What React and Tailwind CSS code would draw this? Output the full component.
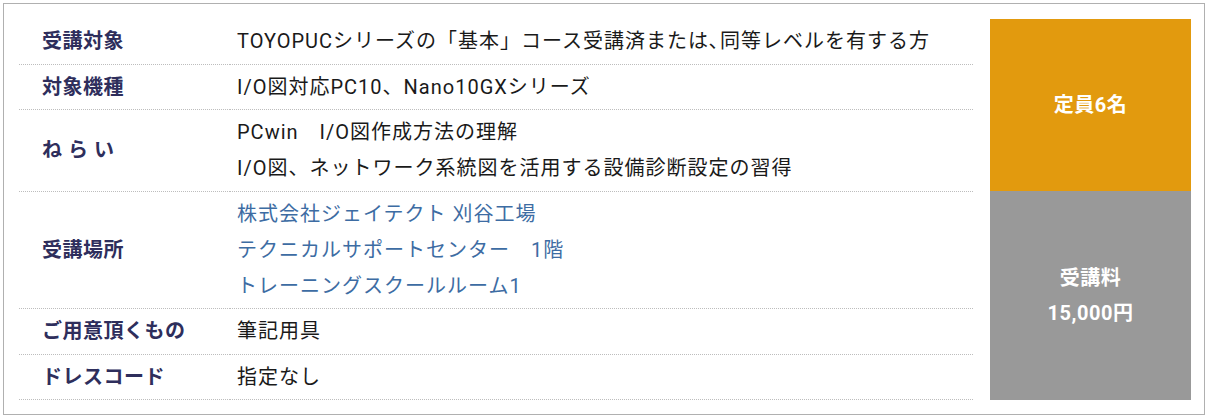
import React from "react";

const rows = [
  { label: "受講対象", lines: ["TOYOPUCシリーズの「基本」コース受講済または､同等レベルを有する方"] },
  { label: "対象機種", lines: ["I/O図対応PC10、Nano10GXシリーズ"] },
  { label: "ね ら い", lines: ["PCwin　I/O図作成方法の理解", "I/O図、ネットワーク系統図を活用する設備診断設定の習得"] },
  { label: "受講場所", lines: ["株式会社ジェイテクト 刈谷工場", "テクニカルサポートセンター　1階", "トレーニングスクールルーム1"], blue: true },
  { label: "ご用意頂くもの", lines: ["筆記用具"] },
  { label: "ドレスコード", lines: ["指定なし"] },
];

export default function App() {
  return (
    <div
      className="w-[1206px] h-[420px] bg-white pt-[3px] pl-[3px]"
      style={{ fontFamily: 'Roboto, "Noto Sans CJK JP", sans-serif' }}
    >
      <div className="w-[1202px] h-[412px] border border-[#b0b0b0] pt-[15px] pl-[15px] flex items-start gap-[17px]">
        <div className="w-[954px] flex flex-col text-[20px]">
          {rows.map((r, i) => (
            <div key={i} className="flex">
              <div className="w-[211px] pl-[23px] flex items-center border-b border-dotted border-[#bdbdbd] font-bold tracking-[0.5px] text-[#2e2e5c]">
                {r.label}
              </div>
              <div
                className={`flex-1 pl-[7px] py-[4.25px] leading-[36px] tracking-[1px] border-b border-dotted border-[#bdbdbd] ${
                  r.blue ? "text-[#3d6ca3]" : "text-[#1a1a1a]"
                }`}
              >
                {r.lines.map((l, j) => (
                  <div key={j} className="whitespace-nowrap">{l}</div>
                ))}
              </div>
            </div>
          ))}
        </div>
        <div className="w-[201px] h-[381px] flex flex-col text-white font-bold text-[20px] tracking-[0.5px]">
          <div className="h-[172px] bg-[#e29a0e] flex items-center justify-center">定員6名</div>
          <div className="flex-1 bg-[#999999] flex flex-col items-center justify-center leading-[35px]">
            <div>受講料</div>
            <div>15,000円</div>
          </div>
        </div>
      </div>
    </div>
  );
}
